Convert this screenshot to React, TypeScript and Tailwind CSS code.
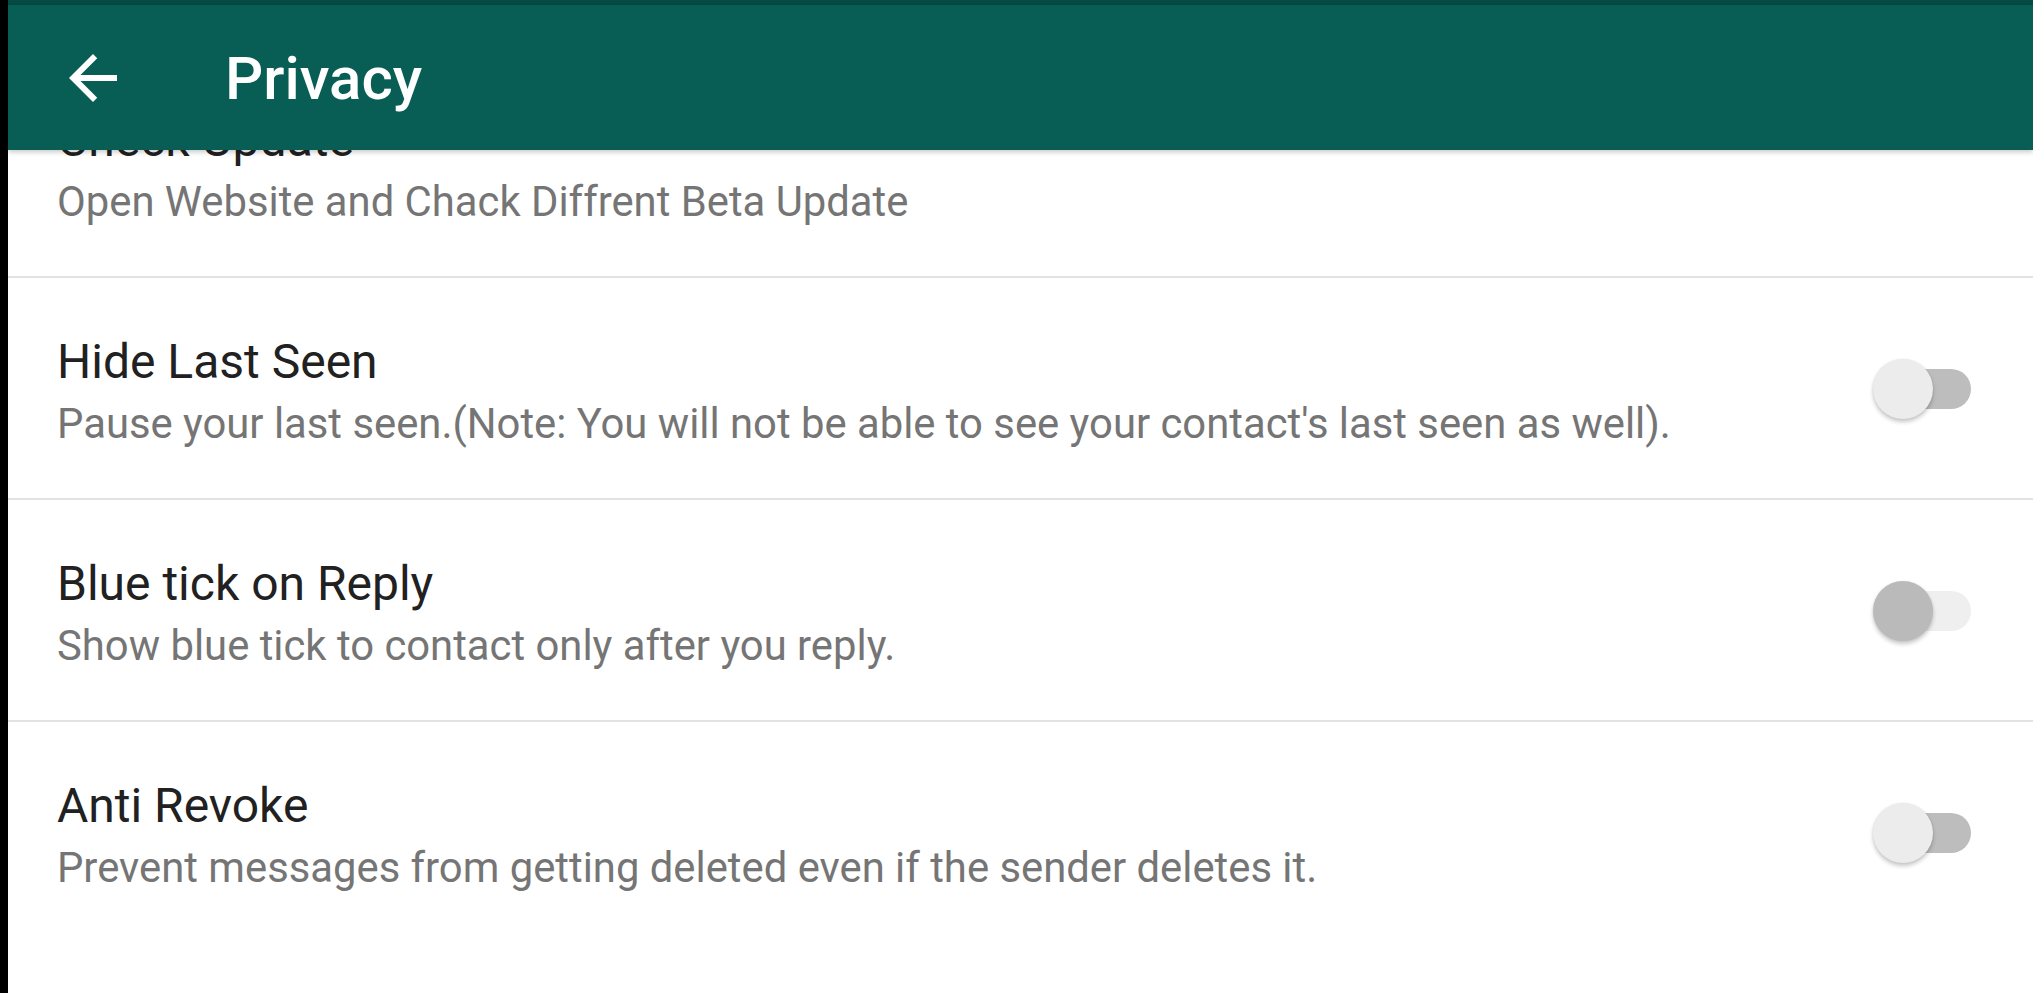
import React from "react";

type Item = {
  title: string;
  subtitle: string;
  toggle?: "off" | "disabled";
};

const items: Item[] = [
  { title: "Check Update", subtitle: "Open Website and Chack Diffrent Beta Update" },
  {
    title: "Hide Last Seen",
    subtitle:
      "Pause your last seen.(Note: You will not be able to see your contact's last seen as well).",
    toggle: "off",
  },
  { title: "Blue tick on Reply", subtitle: "Show blue tick to contact only after you reply.", toggle: "disabled" },
  {
    title: "Anti Revoke",
    subtitle: "Prevent messages from getting deleted even if the sender deletes it.",
    toggle: "off",
  },
];

function Switch({ state }: { state: "off" | "disabled" }) {
  const track = state === "off" ? "bg-[#bdbdbd]" : "bg-[#efefef]";
  const thumb = state === "off" ? "bg-[#ececec]" : "bg-[#bababa]";
  return (
    <div className="relative w-[98px] h-[60px] shrink-0">
      <div className={`absolute left-[7px] right-0 top-[10px] h-[40px] rounded-full ${track}`} />
      <div
        className={`absolute left-0 top-0 w-[60px] h-[60px] rounded-full ${thumb} shadow-[0_3px_4px_rgba(0,0,0,0.22),0_0_2px_rgba(0,0,0,0.08)]`}
      />
    </div>
  );
}

export default function App() {
  return (
    <div
      className="w-[2033px] h-[993px] overflow-hidden bg-black flex"
      style={{ fontFamily: "Roboto, 'Noto Sans', sans-serif" }}
    >
      <div className="w-[8px] shrink-0 bg-black" />
      <div className="flex-1 flex flex-col bg-white overflow-hidden">
        <div className="h-[5px] shrink-0 bg-[#054b43]" />
        <header className="relative z-10 h-[145px] shrink-0 bg-[#085e54] flex items-center shadow-[0_2px_5px_rgba(0,0,0,0.22)]">
          <div className="w-[72px] h-[72px] ml-[49px] flex items-center justify-center">
            <svg width="72" height="72" viewBox="0 0 24 24" fill="#ffffff">
              <path d="M20 11H7.83l5.59-5.59L12 4l-8 8 8 8 1.41-1.41L7.83 13H20v-2z" />
            </svg>
          </div>
          <div className="ml-[96px] text-white text-[60px] leading-[70px] font-medium tracking-[0px] pt-[2px]">
            Privacy
          </div>
        </header>
        <div className="flex-1 overflow-hidden">
          <div className="-mt-[94px] flex flex-col">
            {items.map((it, i) => (
              <div key={it.title} className="flex flex-col">
                <div className="h-[220px] flex">
                  <div className="flex-1 pl-[49px] pt-[56px] flex flex-col">
                    <div className="text-[48px] leading-[56px] text-[#212121]">{it.title}</div>
                    <div className="mt-[4px] text-[41.8px] leading-[60px] text-[#757575]">{it.subtitle}</div>
                  </div>
                  {it.toggle && (
                    <div className="self-center pr-[62px] pt-[1px]">
                      <Switch state={it.toggle} />
                    </div>
                  )}
                </div>
                {i < items.length - 1 && <div className="h-[2px] bg-[#e2e2e2]" />}
              </div>
            ))}
          </div>
        </div>
      </div>
    </div>
  );
}
